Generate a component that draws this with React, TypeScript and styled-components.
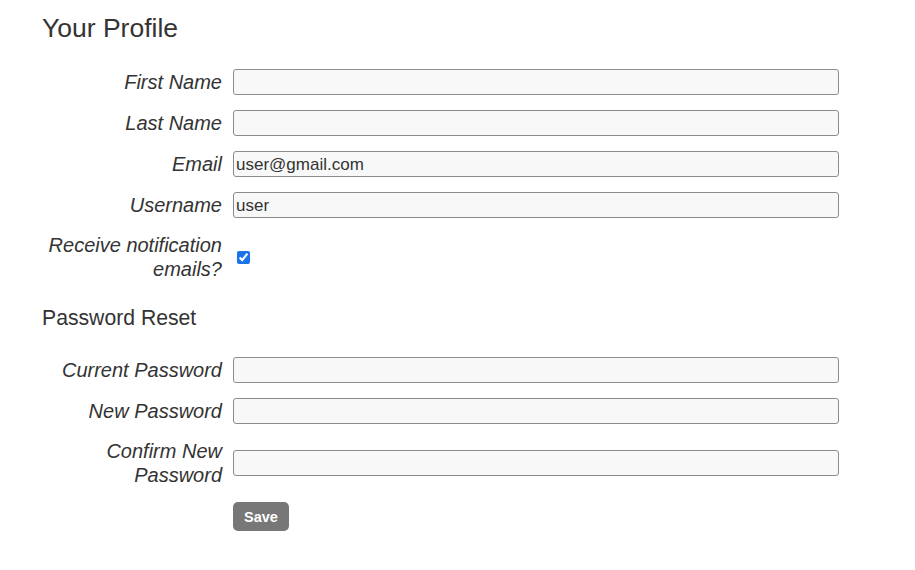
import React from "react";
import styled, { createGlobalStyle } from "styled-components";

const Global = createGlobalStyle`
  html, body { margin: 0; padding: 0; background: #ffffff; }
  body { font-family: "Liberation Sans", Arial, Helvetica, sans-serif; color: #333333; }
`;

const Page = styled.div`
  padding: 13px 0 0 42px;
`;

const Title = styled.h1`
  margin: 0 0 26px 0;
  font-size: 26.5px;
  line-height: 30px;
  font-weight: 400;
  color: #333333;
`;

const SectionTitle = styled.h2`
  margin: 25px 0 27px 0;
  font-size: 21.2px;
  line-height: 24px;
  font-weight: 400;
  color: #333333;
`;

const Form = styled.div`
  display: grid;
  grid-template-columns: 180px 606px;
  column-gap: 11px;
  row-gap: 15px;
  align-items: center;
`;

const Label = styled.label`
  font-size: 20px;
  line-height: 24px;
  font-style: italic;
  text-align: right;
  color: #333333;
`;

const Input = styled.input`
  box-sizing: border-box;
  width: 606px;
  height: 26px;
  margin: 0;
  padding: 1px 2px 0 2px;
  border: 1px solid #8c8c8c;
  border-radius: 3px;
  background: #f8f8f8;
  font-family: "Liberation Sans", Arial, sans-serif;
  font-size: 17px;
  color: #333333;
  outline: none;
`;

const Check = styled.input`
  width: 13px;
  height: 13px;
  margin: 3px 3px 3px 4px;
  justify-self: start;
  accent-color: #1a73e8;
`;

const Spacer = styled.div``;

const SaveButton = styled.button`
  justify-self: start;
  width: 56px;
  height: 29px;
  padding: 0;
  border: none;
  border-radius: 5px;
  background: #777777;
  color: #ffffff;
  font-family: "Liberation Sans", Arial, sans-serif;
  font-size: 14.5px;
  font-weight: 700;
  cursor: pointer;
`;

type FieldProps = { label: React.ReactNode; value?: string; type?: string };

const Field = ({ label, value = "", type = "text" }: FieldProps) => (
  <>
    <Label>{label}</Label>
    <Input type={type} defaultValue={value} />
  </>
);

export default function App() {
  return (
    <Page>
      <Global />
      <Title>Your Profile</Title>
      <Form>
        <Field label="First Name" />
        <Field label="Last Name" />
        <Field label="Email" value="user@gmail.com" />
        <Field label="Username" value="user" />
        <Label>
          Receive notification
          <br />
          emails?
        </Label>
        <Check type="checkbox" defaultChecked />
      </Form>
      <SectionTitle>Password Reset</SectionTitle>
      <Form>
        <Field label="Current Password" type="password" />
        <Field label="New Password" type="password" />
        <Field
          label={
            <>
              Confirm New
              <br />
              Password
            </>
          }
          type="password"
        />
        <Spacer />
        <SaveButton>Save</SaveButton>
      </Form>
    </Page>
  );
}
